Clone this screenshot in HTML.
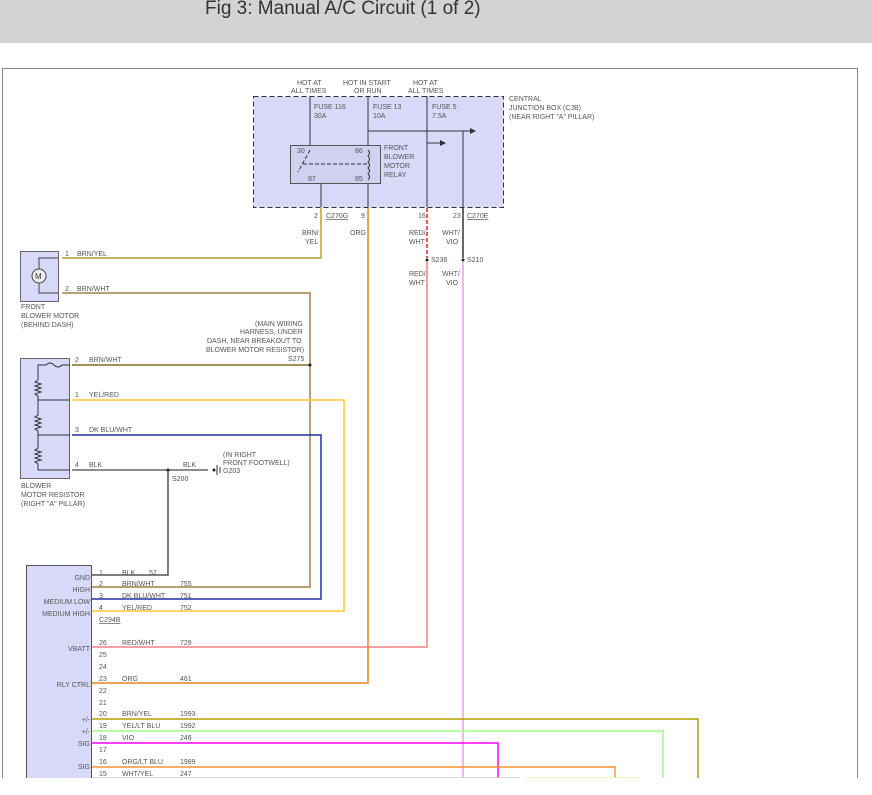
<!DOCTYPE html>
<html><head><meta charset="utf-8">
<style>
html,body{margin:0;padding:0;background:#fff;}
body{width:872px;height:795px;overflow:hidden;position:relative;font-family:"Liberation Sans",sans-serif;}
.hdr{position:absolute;left:0;top:0;width:872px;height:43px;background:#d3d3d3;}
.hdr span{position:absolute;left:205px;top:-2px;font-size:19px;color:#333;white-space:nowrap;}
svg{position:absolute;left:0;top:0;}
text{font-family:"Liberation Sans",sans-serif;font-size:7px;fill:#555;}
</style></head><body>
<div class="hdr"><span>Fig 3: Manual A/C Circuit (1 of 2)</span></div>
<svg width="872" height="795" viewBox="0 0 872 795">
<path d="M2.5 778 V68.5 H857.5 V778" fill="none" stroke="#888" stroke-width="1"/>

<rect x="253.5" y="96.5" width="250" height="111" fill="#d8d8f8" stroke="#333" stroke-dasharray="5,3"/>
<text x="297" y="85">HOT AT</text><text x="291" y="93">ALL TIMES</text>
<text x="343" y="85">HOT IN START</text><text x="354" y="93">OR RUN</text>
<text x="413" y="85">HOT AT</text><text x="408" y="93">ALL TIMES</text>
<text x="509" y="101">CENTRAL</text><text x="509" y="110">JUNCTION BOX (CJB)</text><text x="509" y="119">(NEAR RIGHT "A" PILLAR)</text>
<g stroke="#333" stroke-width="1" fill="none">
<path d="M310 96 V145 M368 96 V145 M427 96 V207 M463 131 V207"/>
<path d="M368 131 H470 M427 143 H440"/>
<path d="M321 183 V207 M368 183 V207"/>
<rect x="290.5" y="145.5" width="90" height="38" fill="#d0d0f0" stroke="#555"/>
<path d="M310 150 L298 172 M303 164 H368" stroke-dasharray="4,2"/>
<path d="M368 150 q3 3 0 6 q3 3 0 6 q3 3 0 6 q3 3 0 6 q3 3 0 6"/>
</g>
<path d="M470 128 l6 3 l-6 3z M440 140 l6 3 l-6 3z" fill="#333"/>
<text x="314" y="109">FUSE 116</text><text x="314" y="118">30A</text>
<text x="373" y="109">FUSE 13</text><text x="373" y="118">10A</text>
<text x="432" y="109">FUSE 5</text><text x="432" y="118">7.5A</text>
<text x="297" y="153">30</text><text x="355" y="153">86</text><text x="308" y="181">87</text><text x="355" y="181">85</text>
<text x="384" y="150">FRONT</text><text x="384" y="159">BLOWER</text><text x="384" y="168">MOTOR</text><text x="384" y="177">RELAY</text>
<text x="314" y="218">2</text><text x="326" y="218" text-decoration="underline">C270G</text>
<text x="361" y="218">9</text><text x="418" y="218">16</text><text x="453" y="218">23</text><text x="467" y="218" text-decoration="underline">C270E</text>
<text x="302" y="235">BRN/</text><text x="305" y="244">YEL</text>
<text x="350" y="235">ORG</text>
<text x="409" y="235">RED/</text><text x="409" y="244">WHT</text>
<text x="442" y="235">WHT/</text><text x="446" y="244">VIO</text>
<text x="431" y="262">S236</text><text x="467" y="262">S210</text>
<text x="409" y="276">RED/</text><text x="409" y="285">WHT</text>
<text x="442" y="276">WHT/</text><text x="446" y="285">VIO</text>

<g fill="none" stroke-width="1.5">
<path d="M62 258 H321 V208" stroke="#b8a030"/>
<path d="M70 683 H368 V208" stroke="#f08020"/>
<path d="M427 208 V258" stroke="#e02020" stroke-dasharray="4,2"/>
<path d="M70 647 H427 V262" stroke="#f08080"/>
<path d="M463 208 V258" stroke="#333"/>
<path d="M463 262 V778" stroke="#e8a0e8"/>
<path d="M62 293 H310 V587 H70" stroke="#a08040"/>
<path d="M72 365 H310" stroke="#8a6a20"/>
<path d="M72 400 H344 V611 H70" stroke="#ffc830"/>
<path d="M72 435 H321 V599 H70" stroke="#2030a0"/>
<path d="M72 470 H208" stroke="#666"/>
<path d="M168 470 V575 H70" stroke="#555"/>
<path d="M70 719 H698 V778" stroke="#b0a000"/>
<path d="M70 731 H663 V778" stroke="#a0ff80"/>
<path d="M70 743 H498 V778" stroke="#ff00ff"/>
<path d="M70 767 H615 V778" stroke="#ff9030"/>
<path d="M70 778 H520" stroke="#ccc"/>
<path d="M525 778 H640" stroke="#f0f0a0"/>
</g>
<g fill="#222"><circle cx="427" cy="260" r="1.5"/><circle cx="463" cy="260" r="1.5"/><circle cx="310" cy="365" r="1.5"/><circle cx="168" cy="470" r="1.5"/><circle cx="214" cy="470" r="1.5"/></g>
<path d="M217 465 V475 M220 467 V473" stroke="#333"/>

<rect x="20.5" y="251.5" width="38" height="50" fill="#d8d8f8" stroke="#666"/>
<circle cx="39" cy="276" r="7" fill="#eee" stroke="#444"/>
<text x="35" y="279" style="font-size:8px;fill:#333">M</text>
<path d="M39 269 V258 H58 M39 283 V293 H58" stroke="#444" fill="none"/>
<text x="65" y="256">1</text><text x="77" y="256">BRN/YEL</text>
<text x="65" y="291">2</text><text x="77" y="291">BRN/WHT</text>
<text x="21" y="309">FRONT</text><text x="21" y="318">BLOWER MOTOR</text><text x="21" y="327">(BEHIND DASH)</text>
<text x="255" y="326">(MAIN WIRING</text><text x="240" y="334">HARNESS, UNDER</text><text x="207" y="343">DASH, NEAR BREAKOUT TO</text><text x="206" y="352">BLOWER MOTOR RESISTOR)</text><text x="288" y="361">S275</text>

<rect x="20.5" y="358.5" width="49" height="120" fill="#d8d8f8" stroke="#666"/>
<g fill="none" stroke="#333">
<path d="M38 380 V365 H46 q4 -4 8 0 q4 4 8 0 H70"/>
<path d="M38 380 l-3 2 l6 2 l-6 2 l6 2 l-6 2 l6 2 l-6 2 l3 2 V415 l-3 2 l6 2 l-6 2 l6 2 l-6 2 l6 2 l-6 2 l3 2 V448 l-3 2 l6 2 l-6 2 l6 2 l-6 2 l6 2 l-6 2 l3 2 V470 H70"/>
<path d="M38 400 H70 M38 435 H70"/>
</g>
<text x="75" y="362">2</text><text x="89" y="362">BRN/WHT</text>
<text x="75" y="397">1</text><text x="89" y="397">YEL/RED</text>
<text x="75" y="432">3</text><text x="89" y="432">DK BLU/WHT</text>
<text x="75" y="467">4</text><text x="89" y="467">BLK</text>
<text x="183" y="467">BLK</text><text x="172" y="481">S200</text>
<text x="223" y="457">(IN RIGHT</text><text x="223" y="465">FRONT FOOTWELL)</text><text x="223" y="473">G203</text>
<text x="21" y="488">BLOWER</text><text x="21" y="497">MOTOR RESISTOR</text><text x="21" y="506">(RIGHT "A" PILLAR)</text>

<rect x="26.5" y="565.5" width="65" height="220" fill="#d8d8f8" stroke="#555"/>
<g style="font-size:7px" text-anchor="end">
<text x="90" y="580">GND</text><text x="90" y="592">HIGH</text><text x="90" y="604">MEDIUM LOW</text><text x="90" y="616">MEDIUM HIGH</text>
<text x="90" y="651">VBATT</text><text x="90" y="687">RLY CTRL</text>
<text x="90" y="722">+/-</text><text x="90" y="734">+/-</text><text x="90" y="746">SIG</text><text x="90" y="769">SIG</text>
</g>
<g>
<text x="99" y="575">1</text><text x="122" y="575">BLK</text><text x="149" y="575">57</text>
<text x="99" y="586">2</text><text x="122" y="586">BRN/WHT</text><text x="180" y="586">755</text>
<text x="99" y="598">3</text><text x="122" y="598">DK BLU/WHT</text><text x="180" y="598">751</text>
<text x="99" y="610">4</text><text x="122" y="610">YEL/RED</text><text x="180" y="610">752</text>
<text x="99" y="622" text-decoration="underline">C294B</text>
<text x="99" y="645">26</text><text x="122" y="645">RED/WHT</text><text x="180" y="645">729</text>
<text x="99" y="657">25</text><text x="99" y="669">24</text>
<text x="99" y="681">23</text><text x="122" y="681">ORG</text><text x="180" y="681">461</text>
<text x="99" y="693">22</text><text x="99" y="705">21</text>
<text x="99" y="716">20</text><text x="122" y="716">BRN/YEL</text><text x="180" y="716">1993</text>
<text x="99" y="728">19</text><text x="122" y="728">YEL/LT BLU</text><text x="180" y="728">1992</text>
<text x="99" y="740">18</text><text x="122" y="740">VIO</text><text x="180" y="740">246</text>
<text x="99" y="752">17</text>
<text x="99" y="764">16</text><text x="122" y="764">ORG/LT BLU</text><text x="180" y="764">1989</text>
<text x="99" y="776">15</text><text x="122" y="776">WHT/YEL</text><text x="180" y="776">247</text>
</g>
<rect x="0" y="778" width="872" height="17" fill="#fff"/>
</svg>
</body></html>
